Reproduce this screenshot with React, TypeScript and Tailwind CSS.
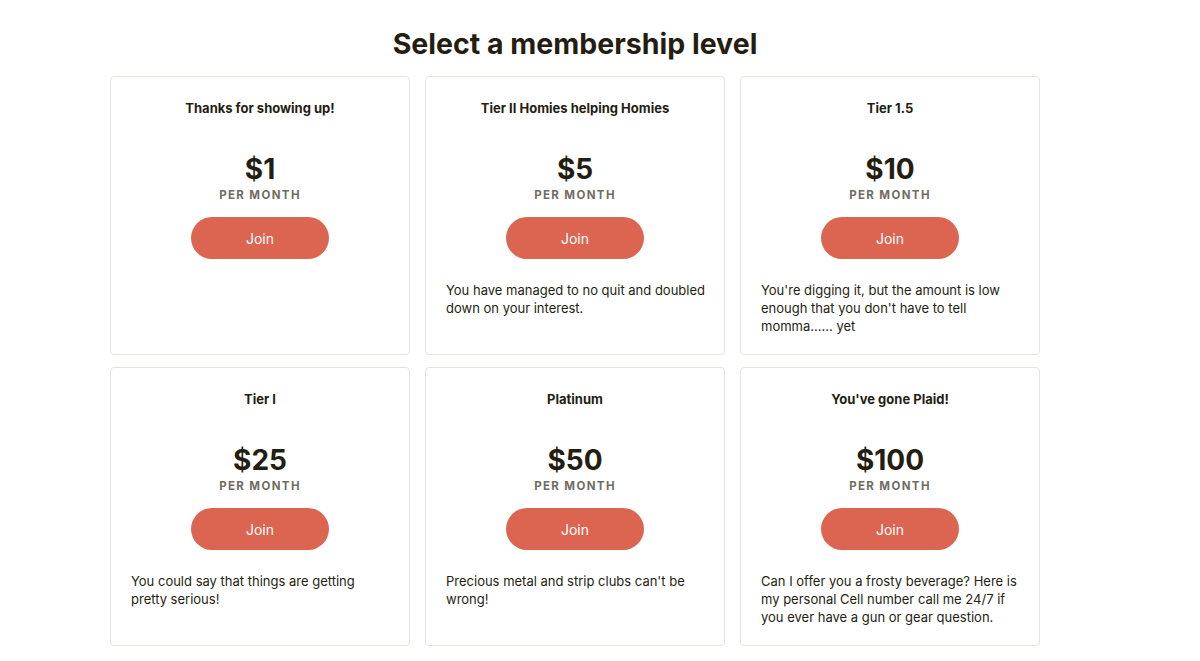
const tiers = [
  { name: 'Thanks for showing up!', price: '$1', desc: '' },
  { name: 'Tier II Homies helping Homies', price: '$5', desc: 'You have managed to no quit and doubled down on your interest.' },
  { name: 'Tier 1.5', price: '$10', desc: "You're digging it, but the amount is low enough that you don't have to tell momma...... yet" },
  { name: 'Tier I', price: '$25', desc: 'You could say that things are getting pretty serious!' },
  { name: 'Platinum', price: '$50', desc: "Precious metal and strip clubs can't be wrong!" },
  { name: "You've gone Plaid!", price: '$100', desc: 'Can I offer you a frosty beverage? Here is my personal Cell number call me 24/7 if you ever have a gun or gear question.' },
];

function TierCard({ name, price, desc }: { name: string; price: string; desc: string }) {
  return (
    <div className="flex flex-col items-center rounded-[4px] border border-[#e6e4df] bg-white px-[18px] pt-[21px] pb-[19px]">
      <div className="text-[13px] leading-[20px] font-bold text-[#241e12] text-center">{name}</div>
      <div className="mt-[33px] text-[28px] leading-[36px] font-bold text-[#241e12]">{price}</div>
      <div className="text-[11.5px] leading-[16px] font-bold tracking-[0.12em] text-[#706c64]">PER MONTH</div>
      <button className="mt-[14px] h-[42px] w-[138px] rounded-full bg-[#db6550] text-[14px] text-white">Join</button>
      {desc && (
        <p className="mt-[22px] self-stretch pl-[2px] text-[13px] leading-[18px] text-[#241e12]">{desc}</p>
      )}
    </div>
  );
}

export default function App() {
  return (
    <div className="min-h-[661px] bg-white font-['Inter',sans-serif]">
      <div className="ml-[110px] w-[930px] pt-[26px]">
        <h1 className="text-center text-[28.5px] leading-[36px] font-bold text-[#241e12]">
          Select a membership level
        </h1>
        <div className="mt-[14px] grid grid-cols-3 gap-x-[15px] gap-y-[12px]">
          {tiers.map(t => (
            <TierCard key={t.name} {...t} />
          ))}
        </div>
      </div>
    </div>
  );
}
